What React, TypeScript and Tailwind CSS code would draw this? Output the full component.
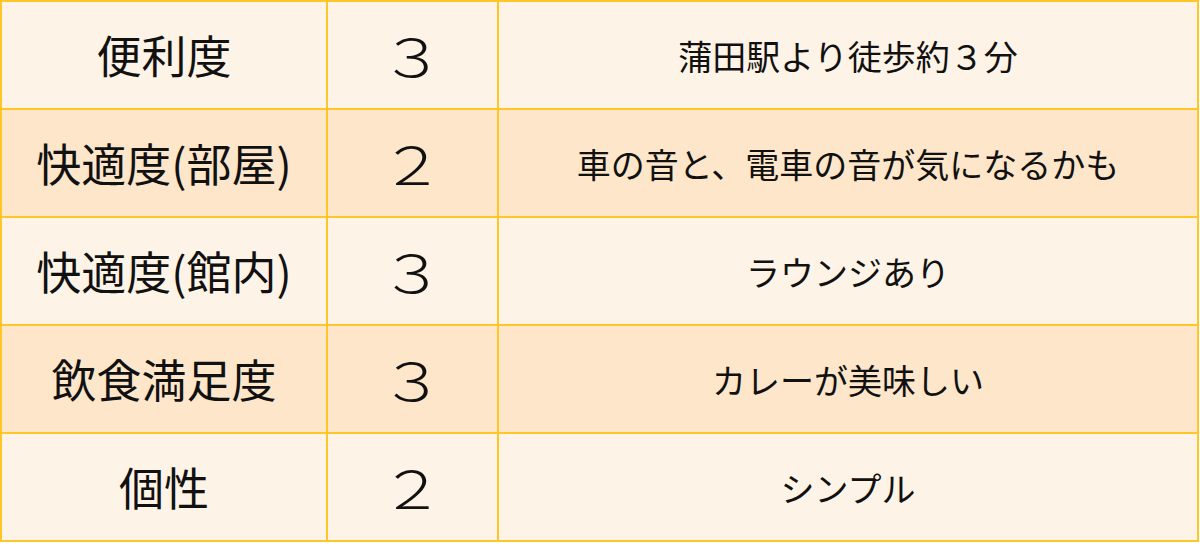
import React from "react";

const rows = [
  { label: "便利度", score: "３", note: "蒲田駅より徒歩約３分", bg: "bg-[#fef3e7]" },
  { label: "快適度(部屋)", score: "２", note: "車の音と、電車の音が気になるかも", bg: "bg-[#fde6ca]" },
  { label: "快適度(館内)", score: "３", note: "ラウンジあり", bg: "bg-[#fef3e7]" },
  { label: "飲食満足度", score: "３", note: "カレーが美味しい", bg: "bg-[#fde6ca]" },
  { label: "個性", score: "２", note: "シンプル", bg: "bg-[#fef3e7]" },
];

export default function App() {
  return (
    <div
      className="w-[1200px] h-[552px] bg-white"
      style={{ fontFamily: '"Noto Sans CJK JP", "Noto Sans", sans-serif' }}
    >
      <div className="grid w-[1199px] grid-cols-[324px_169px_1fr] gap-[2px] border-2 border-[#ffc627] bg-[#ffc627]">
        {rows.map((r, i) => (
          <React.Fragment key={i}>
            <div className={`${r.bg} h-[106px] flex items-center justify-center text-[45px] font-normal text-[#111]`}>
              {r.label}
            </div>
            <div className={`${r.bg} h-[106px] flex items-center justify-center text-[#111]`}>
              <span className="inline-block text-[52px] font-light scale-x-[1.25] leading-none">{r.score}</span>
            </div>
            <div className={`${r.bg} h-[106px] flex items-center justify-center text-[34px] text-[#111]`}>
              {r.note}
            </div>
          </React.Fragment>
        ))}
      </div>
    </div>
  );
}
